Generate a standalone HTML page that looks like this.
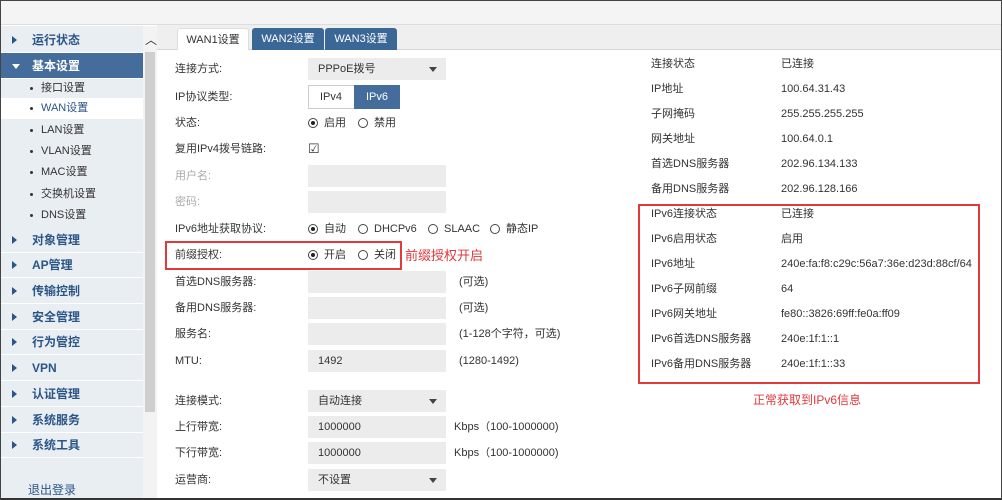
<!DOCTYPE html><html><head><meta charset="utf-8"><style>
*{margin:0;padding:0;box-sizing:border-box}
body{width:1002px;height:500px;overflow:hidden;background:#fff;font-family:"Liberation Sans","Noto Sans CJK SC",sans-serif;font-size:11px;color:#333;position:relative}
.frame{position:absolute;left:0;top:0;width:1002px;height:500px;border:1px solid #444;border-bottom:2px solid #333;pointer-events:none;z-index:9}
.a{position:absolute;white-space:nowrap;line-height:13px}
.hdr{position:absolute;left:0;top:0;width:1002px;height:25px;background:#f4f4f4;border-bottom:1px solid #ddd}
.tabbar{position:absolute;left:157px;top:25px;width:845px;height:25px;background:#efefef;border-bottom:1px solid #d5d5d5}
.tab{position:absolute;top:3px;height:22px;width:72px;text-align:center;line-height:22px;font-size:11px;border-radius:3px 3px 0 0;color:#fff;background:#3b6797}
.side{position:absolute;left:0;top:26px;width:143px;height:474px;background:#e9eef3}
.scroll{position:absolute;left:143px;top:26px;width:14px;height:474px;background:#f3f3f3}
.thumb{position:absolute;left:145px;top:52px;width:10px;height:360px;background:#cfcfcf}
.mi{position:absolute;left:0;width:143px;height:26px;border-bottom:1px solid #fff;font-weight:bold;font-size:12px;color:#2c5587;line-height:26px}
.mi span{position:absolute;left:32px}
.mi i{position:absolute;left:12px;top:9px;width:0;height:0;border-top:4px solid transparent;border-bottom:4px solid transparent;border-left:5px solid #2c5587}
.si{position:absolute;left:0;width:143px;height:21px;line-height:21px;color:#333;font-size:11px}
.si span{position:absolute;left:41px}
.si b{position:absolute;left:30px;top:9px;width:3px;height:3px;background:#333;border-radius:50%}
.lab{position:absolute;left:175px}
.inp{position:absolute;left:308px;width:138px;height:22px;background:#ececec;line-height:22px;padding-left:10px}
.sel:after{content:"";position:absolute;right:9px;top:9px;border-left:4px solid transparent;border-right:4px solid transparent;border-top:5px solid #444}
.rad{position:absolute;width:10px;height:10px;border:1px solid #444;border-radius:50%}
.rad.on:after{content:"";position:absolute;left:2px;top:2px;width:4px;height:4px;background:#222;border-radius:50%}
.red{color:#e0393c}
.box{position:absolute;border:2px solid #e03a3d}
</style></head><body>
<div class="hdr"></div>
<div class="side"></div>
<div class="scroll"></div><div class="thumb"></div>
<div class="a" style="left:145px;top:34px;font-size:12px;color:#333">︿</div>
<div class="mi" style="top:27px;background:#e9eef3"><i></i><span>运行状态</span></div>
<div class="mi" style="top:53px;background:#446d9b;color:#fff"><i style="border-left:4px solid transparent;border-right:4px solid transparent;border-top:5px solid #fff;border-bottom:0;top:11px"></i><span>基本设置</span></div>
<div class="si" style="top:78px"><b></b><span>接口设置</span></div>
<div class="si" style="top:98px;background:#fff;color:#2c5587"><b></b><span>WAN设置</span></div>
<div class="si" style="top:120px"><b></b><span>LAN设置</span></div>
<div class="si" style="top:141px"><b></b><span>VLAN设置</span></div>
<div class="si" style="top:162px"><b></b><span>MAC设置</span></div>
<div class="si" style="top:184px"><b></b><span>交换机设置</span></div>
<div class="si" style="top:205px"><b></b><span>DNS设置</span></div>
<div class="mi" style="top:227px"><i></i><span>对象管理</span></div>
<div class="mi" style="top:252px"><i></i><span>AP管理</span></div>
<div class="mi" style="top:278px"><i></i><span>传输控制</span></div>
<div class="mi" style="top:304px"><i></i><span>安全管理</span></div>
<div class="mi" style="top:329px"><i></i><span>行为管控</span></div>
<div class="mi" style="top:355px"><i></i><span>VPN</span></div>
<div class="mi" style="top:381px"><i></i><span>认证管理</span></div>
<div class="mi" style="top:407px"><i></i><span>系统服务</span></div>
<div class="mi" style="top:432px"><i></i><span>系统工具</span></div>
<div class="a" style="left:28px;top:484px;font-size:12px;color:#2c5587">退出登录</div>
<div class="tabbar">
<div class="tab" style="left:20px;background:#fff;color:#333;border:1px solid #ddd;border-bottom:0">WAN1设置</div>
<div class="tab" style="left:95px">WAN2设置</div>
<div class="tab" style="left:168px">WAN3设置</div>
</div>
<div class="lab a" style="top:63px">连接方式:</div><div class="inp sel" style="top:58px">PPPoE拨号</div>
<div class="lab a" style="top:91px">IP协议类型:</div>
<div class="a" style="left:308px;top:85px;width:92px;height:24px;border:1px solid #ccc;background:#fff"></div>
<div class="a" style="left:320px;top:91px">IPv4</div>
<div class="a" style="left:354px;top:85px;width:46px;height:24px;background:#446d9b;color:#fff;text-align:center;line-height:24px">IPv6</div>
<div class="lab a" style="top:117px">状态:</div>
<div class="rad on" style="left:308px;top:118px"></div><div class="a" style="left:324px;top:117px">启用</div>
<div class="rad" style="left:358px;top:118px"></div><div class="a" style="left:374px;top:117px">禁用</div>
<div class="lab a" style="top:143px">复用IPv4拨号链路:</div>
<div class="a" style="left:308px;top:142px;font-size:13px">☑</div>
<div class="lab a" style="top:170px;color:#aaa">用户名:</div><div class="inp" style="top:165px"></div>
<div class="lab a" style="top:196px;color:#aaa">密码:</div><div class="inp" style="top:191px"></div>
<div class="lab a" style="top:223px">IPv6地址获取协议:</div>
<div class="rad on" style="left:308px;top:224px"></div><div class="a" style="left:324px;top:223px">自动</div>
<div class="rad" style="left:358px;top:224px"></div><div class="a" style="left:374px;top:223px">DHCPv6</div>
<div class="rad" style="left:428px;top:224px"></div><div class="a" style="left:444px;top:223px">SLAAC</div>
<div class="rad" style="left:490px;top:224px"></div><div class="a" style="left:506px;top:223px">静态IP</div>
<div class="box" style="left:165px;top:241px;width:237px;height:29px"></div>
<div class="lab a" style="top:249px">前缀授权:</div>
<div class="rad on" style="left:308px;top:250px"></div><div class="a" style="left:324px;top:249px">开启</div>
<div class="rad" style="left:358px;top:250px"></div><div class="a" style="left:374px;top:249px">关闭</div>
<div class="a red" style="left:405px;top:248px;font-size:13px;line-height:15px">前缀授权开启</div>
<div class="lab a" style="top:276px">首选DNS服务器:</div><div class="inp" style="top:271px"></div><div class="a" style="left:459px;top:276px">(可选)</div>
<div class="lab a" style="top:302px">备用DNS服务器:</div><div class="inp" style="top:297px"></div><div class="a" style="left:459px;top:302px">(可选)</div>
<div class="lab a" style="top:328px">服务名:</div><div class="inp" style="top:323px"></div><div class="a" style="left:459px;top:328px">(1-128个字符，可选)</div>
<div class="lab a" style="top:355px">MTU:</div><div class="inp" style="top:350px">1492</div><div class="a" style="left:459px;top:355px">(1280-1492)</div>
<div class="lab a" style="top:395px">连接模式:</div><div class="inp sel" style="top:390px">自动连接</div>
<div class="lab a" style="top:421px">上行带宽:</div><div class="inp" style="top:416px">1000000</div><div class="a" style="left:454px;top:421px">Kbps（100-1000000)</div>
<div class="lab a" style="top:447px">下行带宽:</div><div class="inp" style="top:442px">1000000</div><div class="a" style="left:454px;top:447px">Kbps（100-1000000)</div>
<div class="lab a" style="top:474px">运营商:</div><div class="inp sel" style="top:469px">不设置</div>
<div class="box" style="left:638px;top:204px;width:342px;height:180px"></div>
<div class="a" style="left:651px;top:58px">连接状态</div><div class="a" style="left:781px;top:58px">已连接</div>
<div class="a" style="left:651px;top:83px">IP地址</div><div class="a" style="left:781px;top:83px">100.64.31.43</div>
<div class="a" style="left:651px;top:108px">子网掩码</div><div class="a" style="left:781px;top:108px">255.255.255.255</div>
<div class="a" style="left:651px;top:133px">网关地址</div><div class="a" style="left:781px;top:133px">100.64.0.1</div>
<div class="a" style="left:651px;top:158px">首选DNS服务器</div><div class="a" style="left:781px;top:158px">202.96.134.133</div>
<div class="a" style="left:651px;top:183px">备用DNS服务器</div><div class="a" style="left:781px;top:183px">202.96.128.166</div>
<div class="a" style="left:651px;top:208px">IPv6连接状态</div><div class="a" style="left:781px;top:208px">已连接</div>
<div class="a" style="left:651px;top:233px">IPv6启用状态</div><div class="a" style="left:781px;top:233px">启用</div>
<div class="a" style="left:651px;top:258px">IPv6地址</div><div class="a" style="left:781px;top:258px">240e:fa:f8:c29c:56a7:36e:d23d:88cf/64</div>
<div class="a" style="left:651px;top:283px">IPv6子网前缀</div><div class="a" style="left:781px;top:283px">64</div>
<div class="a" style="left:651px;top:308px">IPv6网关地址</div><div class="a" style="left:781px;top:308px">fe80::3826:69ff:fe0a:ff09</div>
<div class="a" style="left:651px;top:333px">IPv6首选DNS服务器</div><div class="a" style="left:781px;top:333px">240e:1f:1::1</div>
<div class="a" style="left:651px;top:358px">IPv6备用DNS服务器</div><div class="a" style="left:781px;top:358px">240e:1f:1::33</div>
<div class="a red" style="left:753px;top:393px;font-size:12px;line-height:14px">正常获取到IPv6信息</div>
<div class="frame"></div>
</body></html>
